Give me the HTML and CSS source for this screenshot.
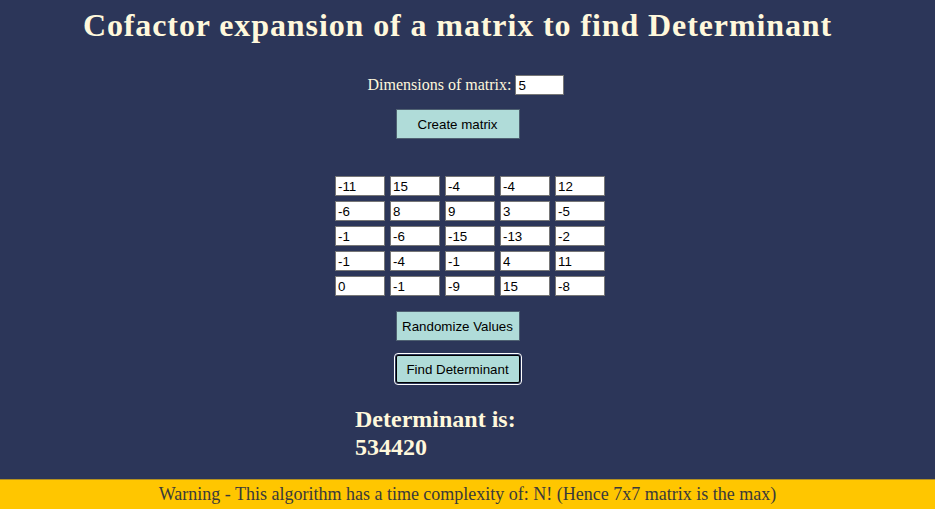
FILE: index.html
```html
<!DOCTYPE html>
<html>
<head>
<meta charset="utf-8">
<link rel="stylesheet" href="styles.css">
</head>
<body>
<div class="page">
  <h1 class="title">Cofactor expansion of a matrix to find Determinant</h1>
  <div class="dims"><label class="dims-label">Dimensions of matrix:</label> <input class="dims-input" type="text" value="5"></div>
  <button class="btn btn-create">Create matrix</button>
  <div class="matrix">
    <input class="cell" value="-11"><input class="cell" value="15"><input class="cell" value="-4"><input class="cell" value="-4"><input class="cell" value="12">
    <input class="cell" value="-6"><input class="cell" value="8"><input class="cell" value="9"><input class="cell" value="3"><input class="cell" value="-5">
    <input class="cell" value="-1"><input class="cell" value="-6"><input class="cell" value="-15"><input class="cell" value="-13"><input class="cell" value="-2">
    <input class="cell" value="-1"><input class="cell" value="-4"><input class="cell" value="-1"><input class="cell" value="4"><input class="cell" value="11">
    <input class="cell" value="0"><input class="cell" value="-1"><input class="cell" value="-9"><input class="cell" value="15"><input class="cell" value="-8">
  </div>
  <button class="btn btn-random">Randomize Values</button>
  <button class="btn btn-find">Find Determinant</button>
  <div class="result">
    <div class="result-line">Determinant is:</div>
    <div class="result-line">534420</div>
  </div>
</div>
<footer class="warning">Warning - This algorithm has a time complexity of: N! (Hence 7x7 matrix is the max)</footer>
</body>
</html>
```
FILE: styles.css
```css
html, body {
  margin: 0;
  padding: 0;
  height: 100%;
}
body {
  background: #2c3659;
  font-family: "Liberation Serif", "Times New Roman", serif;
  color: #fff8dc;
  overflow: hidden;
  display: flex;
  flex-direction: column;
}
.page {
  flex: 1;
  display: flex;
  flex-direction: column;
  align-items: center;
  padding-right: 20px;
}
.title {
  margin: 0;
  padding-top: 7px;
  font-size: 32px;
  font-weight: bold;
  line-height: 37px;
  color: #fff8dc;
  letter-spacing: 0.9px;
}
.dims {
  margin-top: 31px;
  padding-left: 17px;
  display: flex;
  align-items: center;
  font-size: 16px;
  height: 20px;
}
.dims-label {
  margin-right: 4px;
}
.dims-input {
  width: 49px;
  height: 20px;
  box-sizing: border-box;
  border: 1px solid #767676;
  padding: 1px 2px;
  font-family: Arial, "Liberation Sans", sans-serif;
  font-size: 13.33px;
  color: #000;
  background: #fff;
  outline: none;
}
.btn {
  width: 124px;
  height: 30px;
  background: #b0dcd9;
  border: 1px solid #4f6172;
  font-family: Arial, "Liberation Sans", sans-serif;
  font-size: 13.33px;
  color: #000;
  padding: 0;
  border-radius: 0;
}
.btn-create {
  margin-top: 14px;
}
.matrix {
  margin-top: 37px;
  margin-left: 25px;
  display: grid;
  grid-template-columns: repeat(5, 50px);
  column-gap: 5px;
  row-gap: 5px;
}
.cell {
  width: 50px;
  height: 20px;
  box-sizing: border-box;
  border: 1px solid #767676;
  padding: 1px 2px;
  font-family: Arial, "Liberation Sans", sans-serif;
  font-size: 13.33px;
  color: #000;
  background: #fff;
}
.btn-random {
  margin-top: 15px;
}
.btn-find {
  margin-top: 14px;
  border-radius: 2px;
  border: 1px solid #000;
  outline: 1px solid #fff;
  outline-offset: 1px;
  height: 28px;
}
.result {
  margin-top: 22px;
  align-self: stretch;
  padding-left: 355px;
  font-size: 24px;
  font-weight: bold;
  line-height: 28px;
}
.warning {
  height: 29px;
  background: #ffc600;
  color: #3a3a3a;
  font-size: 18px;
  text-align: center;
  line-height: 29px;
  border-top: 1px solid #b39020;
}
```
